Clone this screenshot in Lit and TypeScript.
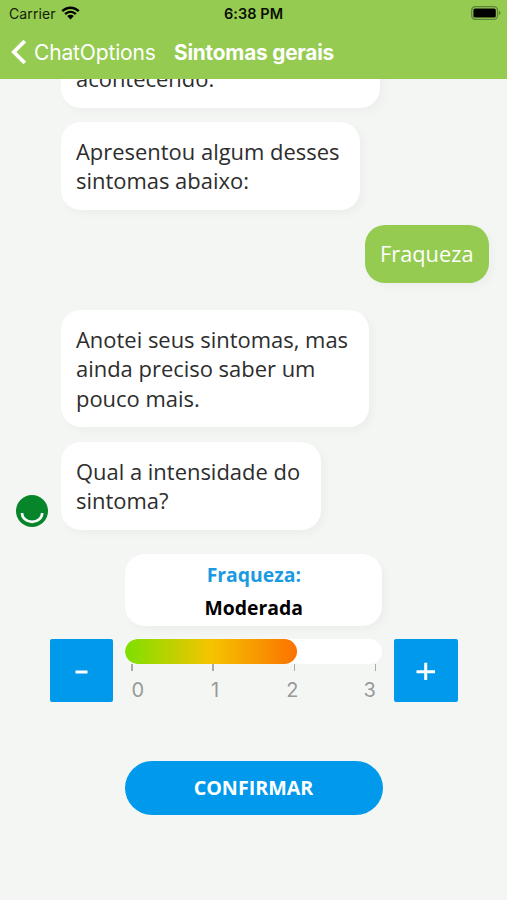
import { LitElement, html, css } from "lit";
import { customElement, property, state } from "lit/decorators.js";
import { classMap } from "lit/directives/class-map.js";

@customElement("status-bar")
class StatusBar extends LitElement {
  static styles = css`
    :host { display: grid; grid-template-columns: 1fr auto 1fr; align-items: center; height: 26px; padding: 1px 6px 0 9px; box-sizing: border-box; color: #141c0a; font: 14px/20px Inter, sans-serif; }
    .left { display: flex; align-items: center; gap: 5px; }
    .carrier { letter-spacing: 0.1px; }
    .wifi { margin-top: -2px; }
    .time { font-weight: 600; font-size: 14.500px; letter-spacing: 0.05px; color: #0a0e05; margin-left: -3px; }
    .battery { justify-self: end; margin-top: -1px; }
    svg { display: block; }
  `;
  render() {
    return html`
      <div class="left">
        <span class="carrier">Carrier</span>
        <svg class="wifi" width="19" height="14" viewBox="0 0 19 14">
          <path d="M.4 4.3C5.4-.9 13.6-.9 18.6 4.3L16.9 6C12.700 1.900 6.300 1.900 2.100 6Z" fill="#000"/>
          <path d="M3.300 7.200C6.800 3.800 12.200 3.800 15.700 7.200L14 8.900C11.400 6.500 7.600 6.500 5 8.900Z" fill="#000"/>
          <path d="M6.200 10.100C8 8.400 11 8.400 12.800 10.100L9.500 13.400Z" fill="#000"/>
        </svg>
      </div>
      <span class="time">6:38 PM</span>
      <svg class="battery" width="30" height="14" viewBox="0 0 30 14">
        <rect x=".7" y=".7" width="25.800" height="12.600" rx="3.600" fill="none" stroke="#60833a" stroke-width="1.300"/>
        <rect x="2.400" y="2.500" width="22.400" height="9" rx="1.600" fill="#000"/>
        <path d="M27.800 4.800c2.200.8 2.200 3.600 0 4.400Z" fill="#60833a"/>
      </svg>`;
  }
}

@customElement("chat-bubble")
class ChatBubble extends LitElement {
  @property({ type: Boolean }) own = false;
  static styles = css`
    :host { display: block; }
    .bubble { box-sizing: border-box; padding: 14.7px 14px 14.500px 15px; border-radius: 20px; background: #fff; color: #2d2d2d; font: 21.950px/29.300px "Open Sans", sans-serif; box-shadow: 4px 4px 8px rgba(0, 0, 0, 0.03); }
    .own { background: #94cb50; color: #fff; font-size: 21.800px; }
  `;
  render() {
    return html`<div class=${classMap({ bubble: true, own: this.own })}><slot></slot></div>`;
  }
}

@customElement("intensity-picker")
class IntensityPicker extends LitElement {
  @state() private level = 2;
  private names = ["Nenhuma", "Leve", "Moderada", "Forte"];
  static styles = css`
    :host { display: grid; grid-template-columns: 63.500px 257px 63.500px; column-gap: 12px; font-family: "Open Sans", sans-serif; }
    .card { grid-column: 2; height: 72px; box-sizing: border-box; padding-top: 4px; margin-bottom: 12.500px; background: #fff; border-radius: 20px; text-align: center; font-size: 19.400px; line-height: 33px; font-weight: 700; color: #000; box-shadow: 4px 4px 8px rgba(0, 0, 0, 0.03); }
    .name { color: #1b9ae4; }
    .step { grid-row: 2; height: 63.500px; padding: 0; border: 0; border-radius: 2px; background: #0199eb; display: grid; place-items: center; }
    .step svg { display: block; }
    .scale { grid-row: 2; }
    .track { height: 25px; margin-top: 0.500px; border-radius: 13px; background: #fff; overflow: hidden; }
    .fill { height: 100%; border-radius: 13px; background: linear-gradient(90deg, #7de000, #f5c400 50%, #fb7200); }
    .ticks { display: flex; justify-content: space-between; padding: 0 6px; }
    .tick { width: 1.500px; height: 7px; background: #aaa; }
    .labels { display: flex; justify-content: space-between; padding: 0 6px; color: #999; font: 20px/24px Inter, sans-serif; margin-top: 6.500px; }
    .label { width: 13px; text-align: center; }
  `;
  private change(delta: number) {
    this.level = Math.max(0, Math.min(3, this.level + delta));
  }
  render() {
    const marks = [0, 1, 2, 3];
    return html`
      <div class="card"><div class="name">Fraqueza:</div><div>${this.names[this.level]}</div></div>
      <button class="step" aria-label="Diminuir" @click=${() => this.change(-1)}>
        <svg width="20" height="20" viewBox="0 0 20 20"><path d="M3.500 12h12" stroke="#fff" stroke-width="3"/></svg>
      </button>
      <div class="scale">
        <div class="track"><div class="fill" style="width:${(this.level / 3) * 100}%"></div></div>
        <div class="ticks">${marks.map(() => html`<span class="tick"></span>`)}</div>
        <div class="labels">${marks.map((n) => html`<span class="label">${n}</span>`)}</div>
      </div>
      <button class="step" aria-label="Aumentar" @click=${() => this.change(1)}>
        <svg width="20" height="20" viewBox="0 0 20 20"><path d="M.5 11.700h18.500M9.700 2.700v17.300" stroke="#fff" stroke-width="3"/></svg>
      </button>`;
  }
}

@customElement("app-root")
class AppRoot extends LitElement {
  static styles = css`
    :host { display: flex; flex-direction: column; height: 900px; overflow: hidden; background: #f4f6f4; }
    .header { flex: none; height: 79px; background: #94cb50; }
    .nav { display: flex; align-items: center; height: 53px; padding-left: 11px; color: #fff; font: 21px/26px Inter, sans-serif; white-space: nowrap; }
    .chevron { display: block; flex: none; margin-top: -1px; }
    .back { width: 121px; margin-left: 8px; letter-spacing: -0.15px; }
    .title { margin-left: 19px; font-weight: 700; font-size: 20.800px; letter-spacing: -0.2px; }
    .chat { flex: none; display: flex; flex-direction: column; align-items: flex-start; gap: 14.900px; height: 461px; padding: 0 18px 0 61px; box-sizing: border-box; overflow: hidden; }
    .previous { width: 319px; margin: -29.900px 0 -0.500px; }
    .question { width: 299px; }
    .reply { align-self: flex-end; width: 124px; margin-bottom: 12.200px; }
    .note { width: 308px; }
    .intensity { width: 260px; }
    .last { display: flex; align-items: flex-end; gap: 13px; margin-left: -45px; }
    .avatar { display: block; margin-bottom: 3px; }
    .picker { width: 409px; margin: 14px 0 0 49.800px; }
    .confirm { align-self: center; width: 258px; height: 53.500px; margin: 59px 0 0 1px; padding: 0 1px 1px 0; border: 0; border-radius: 27px; background: #0199eb; color: #fff; font: 700 19.700px/27px "Open Sans", sans-serif; }
  `;
  render() {
    return html`
      <header class="header">
        <status-bar></status-bar>
        <nav class="nav">
          <svg class="chevron" width="15" height="26" viewBox="0 0 15 26"><path d="M13.800 2L2.800 13L13.800 24" fill="none" stroke="#fff" stroke-width="3.800"/></svg>
          <span class="back">ChatOptions</span>
          <span class="title">Sintomas gerais</span>
        </nav>
      </header>
      <main class="chat">
        <chat-bubble class="previous">acontecendo.</chat-bubble>
        <chat-bubble class="question">Apresentou algum desses sintomas abaixo:</chat-bubble>
        <chat-bubble class="reply" own>Fraqueza</chat-bubble>
        <chat-bubble class="note">Anotei seus sintomas, mas ainda preciso saber um pouco mais.</chat-bubble>
        <div class="last">
          <svg class="avatar" width="32" height="32" viewBox="0 0 32 32"><circle cx="16" cy="16" r="16" fill="#07852a"/><path d="M6 18a10 8.800 0 0 0 20.200 0" fill="none" stroke="#fff" stroke-width="2.600"/></svg>
          <chat-bubble class="intensity">Qual a intensidade do sintoma?</chat-bubble>
        </div>
      </main>
      <intensity-picker class="picker"></intensity-picker>
      <button class="confirm">CONFIRMAR</button>`;
  }
}
